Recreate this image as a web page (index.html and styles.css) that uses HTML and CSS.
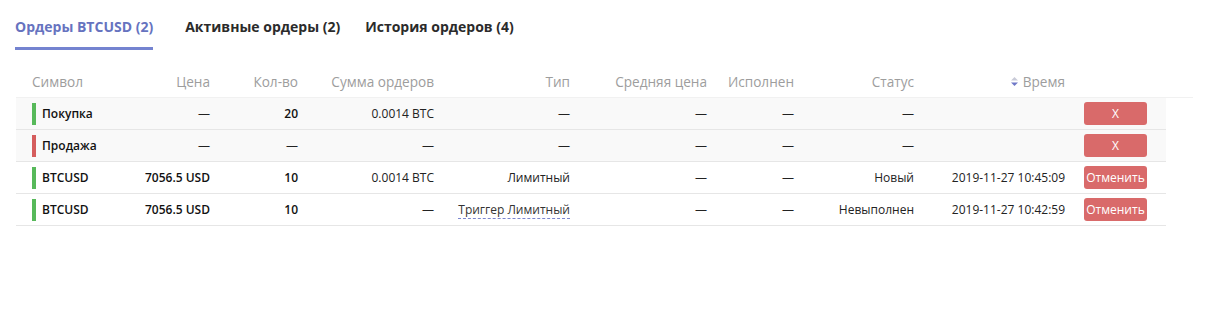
FILE: index.html
```html
<!DOCTYPE html>
<html lang="ru">
<head>
<meta charset="utf-8">
<title>Ордеры</title>
<link rel="stylesheet" href="styles.css">
</head>
<body>
<div class="page">
  <nav class="tabs">
    <div class="tab active">Ордеры BTCUSD (2)</div>
    <div class="tab t2">Активные ордеры (2)</div>
    <div class="tab">История ордеров (4)</div>
  </nav>
  <div class="table">
    <div class="head">
      <div class="c l">Символ</div>
      <div class="c">Цена</div>
      <div class="c">Кол-во</div>
      <div class="c">Сумма ордеров</div>
      <div class="c">Тип</div>
      <div class="c">Средняя цена</div>
      <div class="c">Исполнен</div>
      <div class="c">Статус</div>
      <div class="c sort"><svg class="sorticon" width="7" height="9" viewBox="0 0 7 9"><path d="M3.5 0 L7 3.6 L0 3.6 Z" fill="#c9cbd8"/><path d="M3.5 9 L7 5.4 L0 5.4 Z" fill="#7079c8"/></svg>Время</div>
      <div class="c"></div>
    </div>
    <div class="row gray">
      <div class="c l sym"><span class="bar buy"></span><b>Покупка</b></div>
      <div class="c">—</div>
      <div class="c b">20</div>
      <div class="c">0.0014 BTC</div>
      <div class="c">—</div>
      <div class="c">—</div>
      <div class="c">—</div>
      <div class="c">—</div>
      <div class="c"></div>
      <div class="c act"><button class="btn">X</button></div>
    </div>
    <div class="row gray">
      <div class="c l sym"><span class="bar sell"></span><b>Продажа</b></div>
      <div class="c">—</div>
      <div class="c">—</div>
      <div class="c">—</div>
      <div class="c">—</div>
      <div class="c">—</div>
      <div class="c">—</div>
      <div class="c">—</div>
      <div class="c"></div>
      <div class="c act"><button class="btn">X</button></div>
    </div>
    <div class="row">
      <div class="c l sym"><span class="bar buy"></span><b>BTCUSD</b></div>
      <div class="c b">7056.5 USD</div>
      <div class="c b">10</div>
      <div class="c">0.0014 BTC</div>
      <div class="c">Лимитный</div>
      <div class="c">—</div>
      <div class="c">—</div>
      <div class="c">Новый</div>
      <div class="c">2019-11-27 10:45:09</div>
      <div class="c act"><button class="btn">Отменить</button></div>
    </div>
    <div class="row">
      <div class="c l sym"><span class="bar buy"></span><b>BTCUSD</b></div>
      <div class="c b">7056.5 USD</div>
      <div class="c b">10</div>
      <div class="c">—</div>
      <div class="c"><span class="dashed">Триггер Лимитный</span></div>
      <div class="c">—</div>
      <div class="c">—</div>
      <div class="c">Невыполнен</div>
      <div class="c">2019-11-27 10:42:59</div>
      <div class="c act"><button class="btn">Отменить</button></div>
    </div>
  </div>
</div>
</body>
</html>
```

FILE: styles.css
```css
html, body {
  margin: 0;
  padding: 0;
  background: #ffffff;
}
body {
  font-family: "Open Sans", "Liberation Sans", sans-serif;
  color: #222;
}
.page {
  padding: 0 15px 0 16px;
}
.tabs {
  display: flex;
  gap: 32px;
  margin-left: -1px;
}
.tab {
  font-family: "Open Sans", sans-serif;
  font-weight: 700;
  font-size: 14px;
  line-height: 20px;
  padding: 17px 0 10px;
  border-bottom: 3px solid transparent;
  color: #2b2b2b;
  white-space: nowrap;
}
.tab.active {
  color: #6673bf;
  border-bottom-color: #7483d0;
}
.tab.t2 {
  flex: 0 0 148px;
  width: 148px;
  min-width: 0;
}
.table {
  margin-top: 15px;
}
.head, .row {
  display: grid;
  grid-template-columns: 114px 80px 88px 136px 136px 137px 87px 120px 151px 101px;
  align-items: center;
}
.head {
  height: 32px;
  width: 1177px;
  grid-template-columns: 114px 80px 88px 136px 136px 137px 87px 120px 151px 128px;
  border-bottom: 1px solid #f1f1f1;
  font-size: 13.6px;
  color: #9d9d9d;
}
.row {
  width: 1150px;
  height: 31px;
  border-bottom: 1px solid #e6e6e6;
  font-size: 12px;
  color: #222;
}
.row.gray {
  background: #f9f9f9;
}
.c {
  text-align: right;
  white-space: nowrap;
}
.c.l {
  text-align: left;
  padding-left: 16px;
}
.sym {
  display: flex;
  align-items: center;
  height: 22px;
}
.bar {
  width: 4px;
  height: 22px;
  margin-right: 6px;
}
.bar.buy { background: #57b95a; }
.bar.sell { background: #d55d5d; }
.sym b, .c.b {
  font-weight: 600;
  color: #111;
}
.sort {
  display: flex;
  justify-content: flex-end;
  align-items: center;
  gap: 5px;
}
.act {
  text-align: left;
  padding-left: 19px;
}
.btn {
  width: 63px;
  height: 23px;
  border: 0;
  border-radius: 3px;
  background: #d96a6a;
  color: #fff;
  font-family: "Open Sans", sans-serif;
  font-size: 12px;
  padding: 0;
  display: block;
}
.dashed {
  color: #333;
  border-bottom: 1px dashed #7b86d0;
}
```
